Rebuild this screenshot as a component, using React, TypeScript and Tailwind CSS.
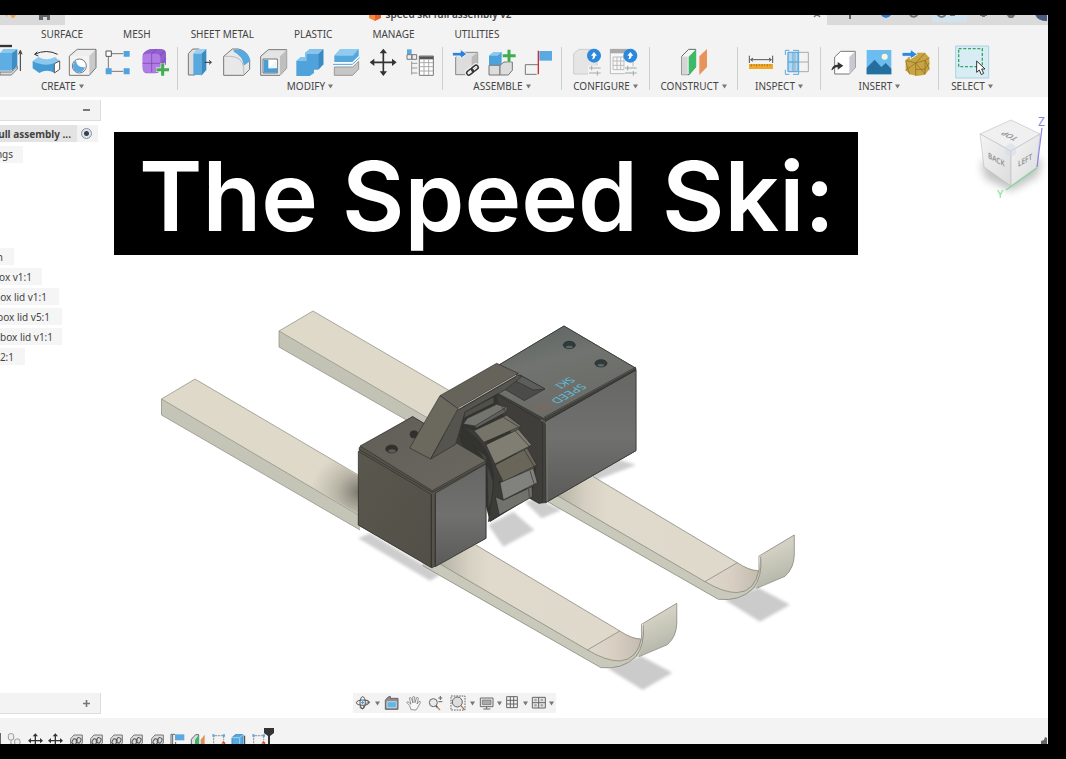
import React from "react";

type Kids = { children: React.ReactNode };

function Icon({ box, label, children, className = "w-7 h-7" }: Kids & { box: string; label: string; className?: string }) {
  return (
    <button type="button" aria-label={label} className="block shrink-0">
      <svg viewBox={box} className={`${className} block overflow-visible`} fill="none" strokeWidth={3}>
        {children}
      </svg>
    </button>
  );
}

function Caret() {
  return (
    <svg viewBox="0 0 6 5" className="h-[5px] w-[5px]" fill="#777">
      <path d="M0 0h6L3 5z" />
    </svg>
  );
}

function Group({ title, className, children, align = "items-center" }: Kids & { title: string; className: string; align?: string }) {
  return (
    <div className={`flex shrink-0 flex-col gap-px ${align} ${className}`}>
      <div className="flex h-[30px] items-center gap-2">{children}</div>
      <button type="button" className="flex h-4 items-center gap-[3px] text-[10px] leading-4">
        {title}
        <Caret />
      </button>
    </div>
  );
}

function Divider() {
  return <div className="h-[43px] w-px shrink-0 bg-[#cfcfcf]" />;
}

const BLUE = "#5aa9e0";
const G = "#777";

function TitleStrip() {
  return (
    <div className="flex h-[10px] shrink-0 items-start overflow-hidden bg-[#f3f3f3]">
      <div className="h-full w-[65px] shrink-0 bg-[#dadada]">
        <svg viewBox="0 0 65 10" className="h-[10px] w-[65px]">
          <path d="M5 0l3 2-1-2zM10 0h6l-2 3h-2z" fill="#edaa4c" />
          <path d="M39 0h11v5h-3V2h-4v3h-4z" fill="#666" />
        </svg>
      </div>
      <div className="flex flex-1 items-start justify-center gap-[5px] pl-[8px]">
        <svg viewBox="0 0 12 6" className="h-[6px] w-3">
          <path d="M0 0h6v6L0 3z" fill="#f58a38" />
          <path d="M6 0h6v3L6 6z" fill="#e8602b" />
        </svg>
        <h1 className="-mt-[10px] text-[10px] leading-[18px] font-semibold text-[#444]">speed ski full assembly v2</h1>
      </div>
      <svg viewBox="0 0 20 10" className="h-[10px] w-5 shrink-0" stroke="#777" strokeWidth={1.5}>
        <path d="M7 2l3-3 3 3" fill="none" />
      </svg>
      <div className="h-full w-[221px] shrink-0 bg-[#dadada]">
        <svg viewBox="827 15 221 10" className="h-[10px] w-[221px]" fill="none" strokeWidth={2}>
          <path d="M850 15v4" stroke="#666" />
          <path d="M882 14q4 5 8 0" stroke="#2f80d8" strokeWidth={3} />
          <path d="M910 15q4 4 8-1" stroke="#777" />
          <rect x="932" y="12" width="35" height="10" rx="2" fill="#d0e2ee" />
          <path d="M937 14q5 6 9 0M950 15h5" stroke="#777" />
          <path d="M980 15h7M982 16h3" stroke="#777" />
          <path d="M1006 14h10l-3 4h-4z" fill="#777" />
          <path d="M1035 14q2 7 12 7v-7z" fill="#4a5a80" />
        </svg>
      </div>
    </div>
  );
}

const tabs = ["SURFACE", "MESH", "SHEET METAL", "PLASTIC", "MANAGE", "UTILITIES"];

function Flash() {
  return <path d="M0-11l-9 11h6q0 8-4 11 11-2 11-11h5z" fill="#fff" />;
}

function Ribbon() {
  return (
    <header className="h-[72px] shrink-0 overflow-hidden bg-[#f3f3f3] text-[#444]">
      <nav className="flex h-[18px] items-center gap-[40px] pl-[41px] text-[10px] leading-[18px]">
        {tabs.map((t) => (
          <a key={t} href="#" className="shrink-0">
            {t}
          </a>
        ))}
      </nav>
      <div className="flex items-start pt-1">
        <Group title="CREATE" className="w-[177px] [&>button]:ml-[41px]" align="items-start">
          <Icon label="Extrude" box="0 141 72 84" className="h-7 w-6">
            <path d="M0 135h36" stroke="#333" strokeWidth={7} />
            <path d="M0 213h34l18-17v8l-18 18H0z" fill="#ddd" stroke={G} />
            <path d="M0 156h36v53H0z" fill="#5eaee3" />
            <path d="M0 156l10-12h42l-16 12z" fill="#8ac8f0" />
            <path d="M36 156l16-12v50l-16 15z" fill="#3d8ec5" />
            <path d="M61 210v-58m-5 8l5-12 5 12" stroke="#333" />
          </Icon>
          <Icon label="Revolve" box="96 141 84 84">
            <path d="M104 160q35-17 69 0M104 160l8-8m-8 8l11 5" stroke="#333" />
            <path d="M98 180l17-12q25 14 50 0l15 12q-41 26-82 0z" fill="#8ac8f0" />
            <path d="M98 180q34 18 65 7v28q-24-12-45 1l-20-14z" fill="#459bd3" />
            <path d="M163 188l16-8v25l-16 11z" fill="#fff" stroke="#555" />
          </Icon>
          <Icon label="Hole" box="204 141 84 84">
            <path d="M208 165l24-20h56l-20 20z" fill="#eee" />
            <path d="M268 165l20-20v55l-20 23z" fill="#c9c9c9" />
            <path d="M208 165l24-20h56v55l-20 23h-60z" stroke={G} />
            <circle cx="238" cy="195" r="21" fill="#fff" stroke={G} />
            <path d="M228 179q2 20 27 20-4 15-18 15-18-2-18-19 2-13 9-16z" fill={BLUE} />
          </Icon>
          <Icon label="Pattern" box="312 141 84 84">
            <path d="M325 158v53M334 158h36M334 211h36" stroke={G} />
            <path d="M318 150h16v16h-16z" fill="#fff" stroke="#555" />
            <path d="M371 150h18v17h-18zM317 202h18v18h-18zM371 202h18v18h-18z" fill="#4da2df" />
          </Icon>
          <Icon label="Create form" box="420 141 84 84">
            <path d="M428 162q2-10 22-18h34q14 2 14 14v32l-18 20q-5 7-14 7h-25q-13-1-13-17z" fill="#925fce" />
            <path d="M428 168q0-10 14-10h25q14 0 14 12v28q0 17-14 17h-25q-14 0-14-17z" fill="#b17de5" />
            <path d="M455 158v56M428 187h53m-1-24l15-13M481 190l17-17M455 158l14-13" stroke="#713eae" strokeWidth={2} />
            <path d="M488 186v39m-20-19h40" stroke="#f3f3f3" strokeWidth={13} />
            <path d="M488 187v37m-19-18h38" stroke="#40ad50" strokeWidth={9} />
          </Icon>
        </Group>
        <Divider />
        <Group title="MODIFY" className="w-[264px]">
          <Icon label="Press pull" box="567 141 84 84">
            <path d="M568 158l13-14h20l-13 14v64h-20z" fill="#ddd" stroke={G} />
            <path d="M583 158l15-14h24l-15 14v64h-24z" fill="#58a9df" />
            <path d="M607 158l15-14v63l-15 17z" fill="#3a8bc2" />
            <path d="M583 158l15-14h24l-15 14z" fill="#9bd0f2" />
            <path d="M617 184h20m-7-6l7 6-7 6" stroke="#333" />
          </Icon>
          <Icon label="Fillet" box="675 141 84 84">
            <path d="M674 166l26-22h18q26 5 34 34v27l-18 18h-60z" fill="#e8e8e8" stroke={G} />
            <path d="M704 146h20q26 7 30 34l-20 14q-1-28-30-42z" fill="#57a9e0" />
            <path d="M675 166h20q36 2 39 34v20" stroke="#bbb" />
          </Icon>
          <Icon label="Shell" box="3 141 84 84">
            <path d="M5 166l23-20h55v56l-20 21H5z" fill="#e4e4e4" stroke={G} />
            <path d="M63 166l20-20v56l-20 21z" fill="#bfbfbf" />
            <path d="M12 174h43v42H12z" fill="#fff" stroke={G} />
            <path d="M14 176h14v26l26-1v14H14z" fill="#489dd5" />
            <path d="M29 202l25-26v26z" fill="#eef6fc" />
          </Icon>
          <Icon label="Combine" box="111 141 84 84">
            <path d="M112 180l14-12h12v-12l14-11h41v45l-15 16h-13v10l-13 9h-40z" fill="#4fa2da" />
            <path d="M112 180l14-12h12v-12l14-11h41l-14 14h-36v21z" fill="#87c4eb" />
            <path d="M179 159l14-14v45l-14 15z" fill="#3a8bc2" />
          </Icon>
          <Icon label="Split body" box="219 141 84 84">
            <path d="M226 164l18-20h55v22l-18 17h-55z" fill="#55a7de" />
            <path d="M226 164l18-20h55l-17 20z" fill="#91cbef" />
            <path d="M226 198h55l18-17v23l-18 19h-55z" fill="#c6c6c6" stroke="#999" />
            <path d="M222 189h58l22-20" stroke="#fff" strokeWidth={9} />
            <path d="M222 190h58l22-20" stroke="#4ba1db" />
          </Icon>
          <Icon label="Move" box="325 141 84 84">
            <path d="M371 150v70M336 184h70" stroke="#333" strokeWidth={5} />
            <path d="M371 143l-11 14h22zM371 225l-11-14h22zM330 184l14-11v22zM411 184l-14-11v22z" fill="#333" />
          </Icon>
          <Icon label="Parameters" box="433 141 84 84">
            <path d="M442 145h14v16h-14z" fill={BLUE} />
            <path d="M442 161h14v14h-14zM457 161h14v14h-14z" fill="#eee" stroke={G} />
            <path d="M456 181v40M456 187h17M456 201h17M456 216h17" stroke="#999" />
            <path d="M479 165h42v58h-42z" fill="#fff" stroke={G} />
            <path d="M479 166h42v9h-42z" fill="#555" />
            <path d="M480 185h40M480 197h40M480 210h40M493 175v47M507 175v47" stroke="#aaa" />
          </Icon>
        </Group>
        <Divider />
        <Group title="ASSEMBLE" className="w-[118px]">
          <Icon label="Insert component" box="576 141 84 84">
            <path d="M587 168l16-14h50v47l-18 20h-48z" fill="#ddd" stroke="#888" />
            <path d="M635 168l18-14v47l-18 20z" fill="#bbb" />
            <path d="M577 154h24v-9l20 14-20 14v-8h-24z" fill="#2b83dc" stroke="#f3f3f3" />
            <g transform="rotate(-38 637 207)" stroke="#f3f3f3" strokeWidth={11}>
              <rect x="617" y="201" width="22" height="13" rx="6" />
              <rect x="635" y="201" width="22" height="13" rx="6" />
            </g>
            <g transform="rotate(-38 637 207)" stroke="#333" strokeWidth={4.5}>
              <rect x="617" y="201" width="22" height="13" rx="6" />
              <rect x="635" y="201" width="22" height="13" rx="6" />
            </g>
          </Icon>
          <Icon label="New component" box="684 141 84 84">
            <path d="M687 164l14-11h24v40h-38z" fill="#4da2dc" />
            <path d="M687 164l14-11h24l-12 11z" fill="#8bc9ef" />
            <path d="M687 193h33v29h-33z" fill="#ddd" stroke={G} />
            <path d="M720 193l12-10h25v25l-12 14h-25z" fill="#ddd" stroke={G} />
            <path d="M747 145v39m-19-20h41" stroke="#f3f3f3" strokeWidth={13} />
            <path d="M747 146v37m-19-19h39" stroke="#40ad50" strokeWidth={9} />
          </Icon>
          <Icon label="Joint origin" box="12 141 84 84">
            <path d="M55 191H16v29h34" stroke={G} />
            <path d="M58 150h38v29H58z" fill={BLUE} />
            <path d="M55 149v71" stroke="#c9303c" strokeWidth={4} />
          </Icon>
        </Group>
        <Divider />
        <Group title="CONFIGURE" className="w-[87px]">
          <Icon label="Configure" box="162 141 84 84">
            <path d="M161 158l16-13h52l3 62-14 12h-57z" fill="#e5e5e5" stroke="#ccc" />
            <path d="M204 194h40v30h-40z" fill="#f3f3f3" />
            <path d="M207 201h35M207 216h35M215 194v14M232 210v14" stroke="#aaa" />
            <circle cx="222" cy="164" r="21" fill="#2b88dc" />
            <g transform="translate(222 164)"><Flash /></g>
          </Icon>
          <Icon label="Configuration table" box="270 141 84 84">
            <path d="M271 145h68v73h-68z" fill="#f8f8f8" stroke="#bbb" />
            <path d="M270 144h60v13h-60z" fill="#aaa" />
            <path d="M279 168h33v38h-33zM279 180h33M279 193h33M291 168v38M302 168v38" stroke="#bbb" />
            <path d="M314 196h38v28h-38z" fill="#f3f3f3" />
            <path d="M315 201h35M315 216h35M323 194v14M340 210v14" stroke="#9aa" />
            <circle cx="331" cy="164" r="21" fill="#2b88dc" />
            <g transform="translate(331 164)"><Flash /></g>
          </Icon>
        </Group>
        <Divider />
        <Group title="CONSTRUCT" className="w-[87px]">
          <Icon label="Offset plane" box="480 141 84 84">
            <path d="M485 166l21-21h21v53l-20 23h-22z" fill="#f4f4f4" stroke="#666" />
            <path d="M485 167h18v54h-18z" fill="#d5d5d5" />
            <path d="M506 167l22-22v54l-22 24z" fill="#3dba68" />
            <path d="M538 166l23-22v54l-23 24z" fill="#e9935c" />
          </Icon>
        </Group>
        <Divider />
        <Group title="INSPECT" className="w-[82px]">
          <Icon label="Measure" box="681 141 84 84">
            <path d="M688 164v22M758 164v22M692 176h62m-55-5l-7 5 7 5m48-10l7 5-7 5" stroke="#555" />
            <path d="M687 189h72v15h-72z" fill="#efaa2d" />
            <path d="M694 190v6M702 190v4M710 190v6M718 190v4M726 190v6M734 190v4M742 190v6M750 190v4" stroke="#a96c0a" />
          </Icon>
          <Icon label="Section analysis" box="-22 141 84 84">
            <path d="M-7 154H25v58H-7z" fill="#add9f5" />
            <path d="M-7 154H54v58H-7zM-7 183h61M14 154v58" stroke="#aaa" />
            <path d="M-7 154H23v58H-7zM8 154v58M-7 183h30" stroke="#58a9df" />
            <path d="M-3 148h-12v14M-15 206v14h12M8 148h17v72H8" stroke="#58a9df" />
          </Icon>
        </Group>
        <Divider />
        <Group title="INSERT" className="w-[117px]">
          <Icon label="Insert derive" box="121 141 84 84">
            <path d="M135 168l18-17h44v49l-18 19h-44z" fill="#fff" stroke={G} />
            <path d="M179 168l18-17v49l-18 19z" fill="#c8c8d0" />
            <path d="M125 207q4-16 19-16v-8l17 11-17 12v-8q-8 0-17 10z" fill="#333" />
          </Icon>
          <Icon label="Canvas" box="229 141 84 84">
            <path d="M231 147h74v73h-74z" fill="#6bbdf0" />
            <path d="M231 200l24-24 20 22 13-12 17 17v17h-74z" fill="#256f9f" />
            <circle cx="285" cy="167" r="9" fill="#fff7d4" />
          </Icon>
          <Icon label="Insert mesh" box="337 141 84 84">
            <path d="M348 178l14-15 22-8h22l13 15v35l-13 16-24 4-22-5-12-12z" fill="#c9a443" />
            <path d="M348 178l30 8 28-8 13-8M378 186v38m28-46v42M348 208l30-22 28 33M348 180l12 40M378 186l28-30M406 178l13 27M378 205h28l13-20" stroke="#8a6b1e" strokeWidth={2} />
            <path d="M337 154h25v-9l21 15-21 14v-8h-25z" fill="#2b88e4" stroke="#f3f3f3" />
          </Icon>
        </Group>
        <Divider />
        <Group title="SELECT" className="w-[66px]">
          <Icon label="Select" box="495 137 102 99" className="h-[33px] w-[34px]">
            <path d="M497 137h99v96h-99z" fill="#d7ecf3" stroke="#a8d3e4" />
            <path d="M506 145h71v54h-71z" stroke="#3aa566" strokeWidth={4} strokeDasharray="9 5" />
            <path d="M560 182v34l8-7 6 14 7-4-6-13h10z" fill="#fff" stroke="#333" />
          </Icon>
        </Group>
      </div>
    </header>
  );
}

function SkiFront() {
  return (
    <g>
      <path d="M-380-240L160 50 592 308 495 365-440-180z" fill="url(#skiTop)" />
      <path d="M592 308Q625 330 657 332 645 397 592 398 550 398 495 365z" fill="url(#skiBend)" />
      <path d="M-440-180L495 365Q550 398 592 398 645 395 657 330L662 285 666 290Q672 345 645 385 600 425 535 418L-440-140z" fill="#c9c9bb" />
      <path d="M660 288Q670 279 763 225V285Q762 325 735 349L645 386Q668 350 664 295z" fill="url(#skiTip)" />
      <path d="M592 308L495 365M-440-180L495 365Q550 398 592 398 645 395 657 330V288L763 225V285Q762 325 735 349L650 385M592 308Q628 332 655 332M662 290Q668 350 640 385 600 425 535 418L-440-140M592 308L160 50" stroke="#77756a" strokeWidth={2} fill="none" />
    </g>
  );
}

const blades = [
  { p: "370,340 405,348 408,355 500,305 503,290 470,283 380,325", f: "#5f5f5c" },
  { p: "382,325 470,283 498,292 405,348 370,342", f: "#74746f" },
  { p: "402,362 500,316 543,348 432,397", f: "#767469" },
  { p: "438,404 535,358 575,405 465,462", f: "#807e73" },
  { p: "465,465 562,414 590,465 490,516", f: "#696659" },
  { p: "480,518 580,475 592,518 490,570", f: "#81817d" },
  { p: "466,560 490,571 576,530 577,560 478,615", f: "#72726d" },
];

function Model() {
  return (
    <svg viewBox="0 97 1048 621" className="absolute inset-0 h-full w-full" role="img" aria-label="Speed ski assembly model">
      <defs>
        <linearGradient id="skiTop"><stop offset="0" stopColor="#ded9ca" /><stop offset=".45" stopColor="#aaa799" /><stop offset=".56" stopColor="#d5d0c2" /><stop offset=".62" stopColor="#dfdacb" /><stop offset="1" stopColor="#dfd9cb" /></linearGradient>
        <linearGradient id="skiBend"><stop offset="0" stopColor="#ded8ca" /><stop offset=".5" stopColor="#d8cfc2" /><stop offset="1" stopColor="#c2bbae" /></linearGradient>
        <linearGradient id="skiTip" x1="0" y1="0" x2=".3" y2="1"><stop offset="0" stopColor="#e1ddcf" /><stop offset=".4" stopColor="#d0cfc1" /><stop offset="1" stopColor="#b4b5aa" /></linearGradient>
        <linearGradient id="leftFace" x2="1" y2="1"><stop offset="0" stopColor="#5a574f" /><stop offset="1" stopColor="#524f47" /></linearGradient>
        <linearGradient id="rightFace" x1="0" y1="0" x2="0" y2="1"><stop offset="0" stopColor="#666764" /><stop offset=".5" stopColor="#70716e" /><stop offset="1" stopColor="#5a5b58" /></linearGradient>
        <linearGradient id="topFace" x1="0" y1="0" x2=".4" y2="1"><stop offset="0" stopColor="#5b6362" /><stop offset=".45" stopColor="#70736f" /><stop offset="1" stopColor="#6b6b66" /></linearGradient>
        <linearGradient id="lid" x2="1" y2="1"><stop offset="0" stopColor="#605e57" /><stop offset="1" stopColor="#6a6860" /></linearGradient>
        <radialGradient id="contact"><stop offset="0" stopColor="#55544c" stopOpacity=".8" /><stop offset=".5" stopColor="#77756a" stopOpacity=".35" /><stop offset="1" stopColor="#8d8a7e" stopOpacity="0" /></radialGradient>
        <filter id="soft"><feGaussianBlur stdDeviation="5" /></filter>
        <clipPath id="nearTop"><path d="M162 399L195 379 360 477V515z" /></clipPath>
      </defs>
      <g transform="translate(540 460) scale(.3333)">
        <g fill="#cbcbcb" filter="url(#soft)">
          <path d="M555 420L655 383 750 434 660 485zM203 625L303 588 397 638 308 690z" />
        </g>
      </g>
      <g transform="translate(340 310) scale(.3333)" fill="#cdcdcd" filter="url(#soft)">
        <path d="M445 645L520 605 583 660 490 710zM555 575L590 565 665 600 605 625zM720 495L840 450 888 465 770 510zM55 685L90 670 300 795 270 812z" />
      </g>
      <path d="M279 331L313 311 450 391 450 431z" fill="#ded9c9" />
      <path d="M279 331L450 431V445L279 347z" fill="#c3c3b5" />
      <path d="M450 445L279 347V331L313 311 450 391M279 331L450 431" fill="none" stroke="#8b897e" strokeWidth={.7} />
      <g transform="translate(540 460) scale(.3333)">
        <svg x="-20" y="0" width="820" height="720" viewBox="-20 0 820 720"><SkiFront /></svg>
      </g>
      <g transform="translate(422.5 528.3) scale(.3333)">
        <svg x="0" y="0" width="820" height="720" viewBox="0 0 820 720"><SkiFront /></svg>
      </g>
      <path d="M161.500 399L195 379 360 476V517z" fill="#ded9c9" />
      <path d="M161.500 399L360 516V530L161.500 415z" fill="#c5c5b7" />
      <ellipse cx="362" cy="492" rx="52" ry="42" fill="url(#contact)" clipPath="url(#nearTop)" />
      <path d="M360 476L195 379 161.500 399V415L360 530M161.500 399L360 516" fill="none" stroke="#8b897e" strokeWidth={.7} />
      <g transform="translate(340 310) scale(.3333)" stroke="#2f2f2c" strokeWidth={2} strokeLinejoin="round">
        <path d="M475 166L672 48 888 175 888 422 617 578 597 580 450 495V240z" fill="#42423e" />
        <path d="M475 166L672 48 888 175 612 326 465 245z" fill="url(#topFace)" />
        <path d="M616 334L888 180V422L617 578z" fill="url(#rightFace)" />
        <path d="M465 250L602 330Q610 338 608 350V575L597 580 445 495z" fill="#3f3e3a" />
        <path d="M612 322L888 171M616 334L888 180" fill="none" />
        <path d="M602 330Q620 335 622 350V574" fill="none" stroke="#71716a" strokeWidth={3} />
        <g fill="#303b3d" stroke="#202324">
          <ellipse cx="688" cy="105" rx="18" ry="11" />
          <ellipse cx="783" cy="160" rx="18" ry="11" />
        </g>
        <g fill="#5c6667" stroke="none"><ellipse cx="688" cy="111" rx="10" ry="4" /><ellipse cx="783" cy="166" rx="10" ry="4" /></g>
        <path d="M580 300L620 280M590 310L635 285" stroke="#976448" />
        <g fill="#5ebddd" stroke="none" fontFamily="Noto Sans, sans-serif" fontSize="36">
          <text transform="matrix(-.85 .48 -.8 -.45 722 220)">SPEED</text>
          <text transform="matrix(-.85 .48 -.8 -.45 688 200)">SKI</text>
        </g>
        <path d="M345 405L375 300 465 238 485 300 420 380 440 455z" fill="#3c3b37" stroke="none" />
        <path d="M370 270L465 240 480 300 590 470 575 560 450 636 430 560 360 390z" fill="#33332f" stroke="none" />
        <path d="M375 305L462 260V280L370 325z" fill="#504f4a" />
        <path d="M358 375Q435 420 460 515 460 570 445 600L440 440z" fill="#454541" />
        <path d="M365 350Q480 425 457 555L445 635 480 615 466 562 495 570 477 516 492 515 465 463 475 460 438 403 445 400 405 360z" fill="#3c3b37" />
        <path d="M500 316L543 348 535 358 575 405 562 414 590 465 580 475 592 518 576 530 577 560 560 540 520 400z" fill="#5f5e56" />
        {blades.map((b) => (
          <polygon key={b.p} points={b.p} fill={b.f} />
        ))}
        <path d="M490 322L535 350M525 362L567 408M553 420L582 469M570 482L582 521M566 537L568 562M485 290L498 306" fill="none" />
        <path d="M58 412L218 320 438 454V685L277 773 55 645z" fill="#55534a" />
        <path d="M55 424L274 553V773L55 645z" fill="url(#leftFace)" />
        <path d="M286 550L438 462V685L286 770z" fill="url(#rightFace)" />
        <path d="M60 408L218 320 438 452 277 542z" fill="url(#lid)" />
        <path d="M56 417L273 545Q282 549 290 541L438 460M274 553V773M286 550V767" fill="none" />
        <ellipse cx="155" cy="417" rx="18" ry="12" fill="#31302d" />
        <ellipse cx="156" cy="423" rx="11" ry="5" fill="#5c5b55" stroke="none" />
        <ellipse cx="222" cy="373" rx="12" ry="11" fill="#31302d" />
        <path d="M500 225L540 195 615 237 553 272 495 238z" fill="#4b4c49" />
        <path d="M540 195L615 237 580 240 520 210z" fill="#5c5e5b" />
        <path d="M300 257L470 160 535 190 352 296z" fill="#66635a" />
        <path d="M300 257L354 296 272 447 209 414z" fill="#6b685e" />
        <path d="M354 298L530 194 545 200 498 238 375 306 347 403 272 447z" fill="#55544f" />
        <path d="M357 295L528 196" stroke="#bab8b1" strokeWidth={3} />
        <path d="M357 299L528 200" stroke="#2c2b29" strokeWidth={2} />
      </g>
    </svg>
  );
}

function ViewCube() {
  return (
    <svg viewBox="975 113 73 92" className="h-[92px] w-[73px] shrink-0" role="img" aria-label="View cube" fontFamily="Noto Sans, sans-serif">
      <defs>
        <filter id="cubeShadow" x="-30%" y="-30%" width="160%" height="160%"><feGaussianBlur stdDeviation="4" /></filter>
        <linearGradient id="cubeFace" y2="1"><stop offset="0" stopColor="#f4f4f4" /><stop offset="1" stopColor="#dcdcdc" /></linearGradient>
      </defs>
      <path d="M981 162l31-8 30 6-4 16-27 15-26-13z" fill="#999" opacity=".6" filter="url(#cubeShadow)" />
      <g stroke="#b9bcc0" strokeWidth={.6}>
        <path d="M980 134L1011 120 1040 134 1011 151z" fill="#f0f0f0" />
        <path d="M980 134L1011 151V186L984 167z" fill="url(#cubeFace)" />
        <path d="M1011 151L1040 134 1037 167 1011 186z" fill="url(#cubeFace)" />
      </g>
      <path d="M1005 147l6-4 5 4v7l-5 3-6-4z" fill="#d4dae8" opacity=".55" />
      <path d="M1037 167L1042 128" stroke="#8b83e8" strokeWidth={1.2} />
      <path d="M1037 168L1006 190" stroke="#84d89b" strokeWidth={1.2} />
      <g fill="#8f9296" fontSize="8" fontWeight="600">
        <text transform="matrix(.8 .42 0 1 988 158)">BACK</text>
        <text transform="matrix(.8 -.46 0 1 1018 167)">LEFT</text>
        <text transform="matrix(-.9 -.44 .9 -.5 1019 138)">TOP</text>
      </g>
      <text x="1038" y="126" fill="#8b83e8" fontSize="12">Z</text>
      <text x="997" y="198" fill="#7be58b" fontSize="11">Y</text>
    </svg>
  );
}

const rows = [
  { t: "n", w: "w-[14px]", pad: "pr-[11px]" },
  { t: "ox v1:1", w: "w-[42px]", pad: "pr-[10px]" },
  { t: "ox lid v1:1", w: "w-[59px]", pad: "pr-[12px]" },
  { t: "box lid v5:1", w: "w-[62px]", pad: "pr-[12px]" },
  { t: "box lid v1:1", w: "w-[62px]", pad: "pr-[9px]" },
  { t: "2:1", w: "w-[25px]", pad: "pr-[11px]" },
];

function Browser() {
  return (
    <aside className="relative flex w-[101px] shrink-0 flex-col pt-[3px] pb-1 text-[10px] text-[#444]">
      <div className="flex h-[21px] items-center justify-end border-r border-b border-[#ddd] bg-[#f3f3f3] pr-[10px]">
        <button type="button" aria-label="Collapse browser"><span className="block h-[2px] w-[7px] bg-[#777]" /></button>
      </div>
      <ul className="pt-1">
        <li className="flex h-[17px] w-[98px] bg-[#f3f3f3]">
          <span className="flex w-[77px] items-center justify-end overflow-hidden bg-[#e3e3e3] pr-[6px] leading-4 font-bold whitespace-nowrap">ull assembly ...</span>
          <label className="flex flex-1 items-center justify-center pr-[3px]">
            <input type="radio" defaultChecked aria-label="Activate assembly" className="h-[11px] w-[11px] appearance-none rounded-full border border-[#8b929e] bg-[radial-gradient(circle,#39414e_0_2px,#dfe5ee_3px)]" />
          </label>
        </li>
        <li className="mt-[4px] flex h-[17px] w-[23px] items-center justify-end overflow-hidden bg-[#f5f5f5] pr-[10px]">ngs</li>
      </ul>
      <ul className="flex flex-col gap-[3px] pt-[85px]">
        {rows.map((r) => (
          <li key={r.t} className={`flex h-[17px] items-center justify-end overflow-hidden bg-[#f5f5f5] leading-4 whitespace-nowrap ${r.w} ${r.pad}`}>{r.t}</li>
        ))}
      </ul>
      <div className="mt-auto flex h-[21px] items-center justify-end border-r border-b border-[#ddd] bg-[#f3f3f3] pr-[10px]">
        <button type="button" aria-label="Expand comments">
          <svg viewBox="0 0 7 7" className="h-[7px] w-[7px]" stroke="#777" strokeWidth={1.6}><path d="M3.500 0v7M0 3.500h7" /></svg>
        </button>
      </div>
    </aside>
  );
}

function NavTool({ box, label, caret, children, gap = "gap-[4px] pr-[4px]" }: Kids & { box: string; label: string; caret?: boolean; gap?: string }) {
  return (
    <button type="button" aria-label={label} className={`flex items-center ${gap}`}>
      <svg viewBox={box} className="h-4 w-4 overflow-visible" fill="none" stroke="#666" strokeWidth={3}>{children}</svg>
      {caret && <Caret />}
    </button>
  );
}

function NavBar() {
  return (
    <div className="ml-[252px] flex h-5 w-[203px] items-center bg-[#f3f3f3] pl-[2px]">
      <NavTool label="Orbit" caret box="44 28 48 48">
        <ellipse cx="67" cy="51" rx="19" ry="8" stroke="#555" />
        <ellipse cx="67" cy="51" rx="8" ry="18" stroke="#555" />
        <path d="M67 46v10M62 51h10" stroke="#3997d5" />
        <path d="M80 42l8 8-10 3M58 65l9 5 4-9" stroke="#555" />
      </NavTool>
      <NavTool label="Look at" box="132 28 48 48" gap="pr-[6px]">
        <path d="M136 44l7-9 8-3v6h23v33h-38z" fill="#8d8d8d" />
        <path d="M141 48h28v18h-28z" fill="#62b3ea" stroke="#eee" strokeWidth={2} />
      </NavTool>
      <NavTool label="Pan" box="197 28 48 48" gap="pr-[6px]">
        <path d="M212 72l-4-12-9-10q2-5 9 2l4 4-5-19q4-4 7 3l4 12-1-18q4-4 6 0l1 17 5-15q5-2 5 3l-4 16 6-8q5-1 4 4l-7 13-6 9z" fill="#f8f8f8" strokeWidth={2} />
      </NavTool>
      <NavTool label="Zoom" box="263 28 48 48" gap="pr-[6px]">
        <circle cx="279" cy="51" r="12" fill="#eaeaea" />
        <path d="M300 31v12M294 37h12M294 48h12" />
        <path d="M287 60l5 6" stroke="#555" strokeWidth={5} />
        <path d="M291 65l8 8" stroke="#c4874b" strokeWidth={4} />
      </NavTool>
      <NavTool label="Fit" caret box="330 28 48 48">
        <path d="M333 31h42v42h-42z" strokeDasharray="5 3" />
        <circle cx="352" cy="49" r="15" fill="#ddd" />
        <path d="M363 60l10 12" stroke="#aa7648" strokeWidth={4} />
      </NavTool>
      <NavTool label="Display settings" caret box="415 28 48 48" gap="gap-[2px] pr-[3px]">
        <path d="M419 37h38v26h-38z" fill="#eee" />
        <path d="M425 43h26v14h-26z" fill="#aaa" strokeWidth={2} />
        <path d="M438 63v7M428 70h21" />
      </NavTool>
      <NavTool label="Grid and snaps" caret box="495 28 48 48" gap="gap-[2px] pr-[3px]">
        <path d="M500 33h32v33h-32zM500 44h32M500 55h32M511 33v33M521 33v33" />
      </NavTool>
      <NavTool label="Viewports" caret box="573 28 48 48" gap="gap-[2px]">
        <path d="M577 35h39v32h-39zM577 51h39M596 35v32" fill="#e5e5e5" />
        <path d="M584 41h5v4h-5zM603 41h5v4h-5zM584 57h5v4h-5zM603 57h5v4h-5z" strokeWidth={2} stroke="#888" />
      </NavTool>
    </div>
  );
}

const steps = ["joint", "move", "move", "link", "link", "link", "link", "link", "flag", "plane", "sketch", "extrude", "sketch"];

function Step({ kind }: { kind: string }) {
  return (
    <svg viewBox="0 0 45 45" className="h-[15px] w-[15px] overflow-visible" fill="none" stroke="#666" strokeWidth={3}>
      {kind === "joint" && (
        <g stroke="#999" fill="#eee">
          <rect x="1" y="2" width="16" height="19" rx="6" />
          <path d="M9 21v14h10" fill="none" />
          <rect x="20" y="18" width="16" height="18" rx="6" />
          <path d="M4 34h10v8H4z" stroke="#7fa4d0" />
        </g>
      )}
      {kind === "move" && (
        <>
          <path d="M22 6v34M6 23h34" stroke="#333" strokeWidth={4} />
          <path d="M22 1l-8 9h16zM0 23l9-8v16zM45 23l-9-8v16z" fill="#333" stroke="none" />
        </>
      )}
      {kind === "link" && (
        <>
          <path d="M5 17L15 6h25v24L28 42H5z" fill="#ddd" stroke="#777" />
          <rect x="10" y="18" width="13" height="16" rx="5" transform="rotate(28 17 26)" stroke="#555" />
          <rect x="23" y="14" width="12" height="16" rx="5" transform="rotate(28 29 22)" stroke="#555" />
        </>
      )}
      {kind === "flag" && <><path d="M3 42V4h12M8 6v36M17 27v15" /><path d="M15 4h28v18H15z" fill={BLUE} stroke="none" /></>}
      {kind === "plane" && <><path d="M4 19L17 5h9v37H4z" fill="#ddd" /><path d="M15 20L27 5v37H15z" fill="#3db46a" stroke="none" /><path d="M32 20L44 5v37H32z" fill="#e28d5e" stroke="none" /></>}
      {kind === "sketch" && (
        <>
          <path d="M8 40V8h30v14" strokeDasharray="7 2" strokeWidth={2} />
          <path d="M4 4h7v7H4zM35 4h7v7h-7zM4 33h7v7H4z" fill={BLUE} stroke="none" />
          <path d="M28 40l12-13" stroke="#edaa43" strokeWidth={7} /><path d="M35 26l7 6" stroke="#d44" strokeWidth={5} />
        </>
      )}
      {kind === "extrude" && <><path d="M3 14L13 5h23v27l-9 10H3z" fill="#59a9df" stroke="#3f8bc0" /><path d="M3 14h23v28M26 14L36 5" stroke="#9bd1f3" /><path d="M41 42V8" stroke="#333" /></>}
    </svg>
  );
}

function Timeline() {
  return (
    <footer className="flex h-[26px] shrink-0 items-start overflow-hidden bg-[#f3f3f3]">
      <svg viewBox="0 0 5 15" className="mt-[15px] h-[15px] w-[5px] shrink-0" stroke="#666"><path d="M.500 0v15" /></svg>
      <ol className="grid w-[264px] shrink-0 grid-cols-[repeat(13,minmax(0,1fr))] pt-[15px]">
        {steps.map((k, i) => (
          <li key={i} className="flex justify-center"><Step kind={k} /></li>
        ))}
      </ol>
      <svg viewBox="0 0 12 17" className="mt-[10px] -ml-[6px] h-[17px] w-3 shrink-0" fill="#333"><path d="M1 0h10v5L7 8v9H5V8L1 5z" /></svg>
      <svg viewBox="0 0 8 8" className="mt-[18px] ml-auto h-2 w-2 shrink-0" fill="#666"><path d="M1 8V5l3-1 1-3 2 1v6z" /></svg>
    </footer>
  );
}

export default function App() {
  return (
    <div className="flex min-h-screen flex-col bg-black pt-[15px] pr-[18px] pb-[15px] font-['Noto_Sans','Open_Sans',sans-serif]">
      <TitleStrip />
      <Ribbon />
      <main className="relative flex flex-1 bg-white">
        <Model />
        <Browser />
        <div className="relative flex flex-1 flex-col justify-between pt-[35px] pb-[5px]">
          <h2 className="ml-[13px] h-[123px] w-[744px] bg-black pl-[25px] font-['Inter','Noto_Sans',sans-serif] text-[96px] leading-[128px] font-semibold whitespace-nowrap text-white">The Speed Ski:</h2>
          <NavBar />
        </div>
        <div className="relative pt-[16px]">
          <ViewCube />
        </div>
      </main>
      <Timeline />
    </div>
  );
}
